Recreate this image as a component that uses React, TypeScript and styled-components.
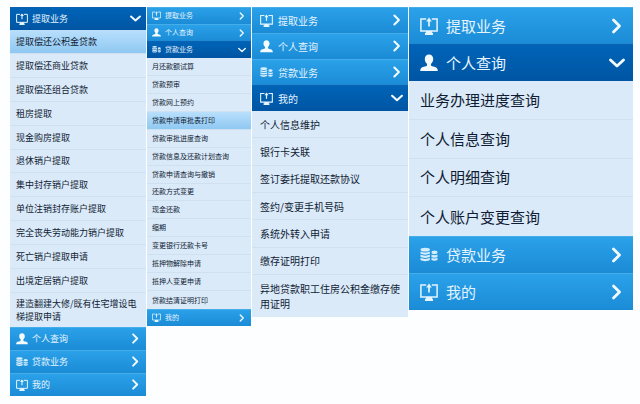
import React from "react";
import styled, { createGlobalStyle, css } from "styled-components";

const GlobalStyle = createGlobalStyle`
  * { box-sizing: border-box; }
  body {
    margin: 0;
    background: #fdfeff;
    font-family: "Noto Sans CJK SC", "Noto Sans", sans-serif;
  }
`;

type Size = "small" | "medium" | "large" | "xlarge";

interface Metrics {
  font: number;
  head: number;
  list: number;
  line: number;
  pad: number;
  indent: number;
  icon: number;
  gap: number;
  arrow: number;
  end: number;
}

const metrics: Record<Size, Metrics> = {
  small: { font: 7, head: 17, list: 251, line: 9, pad: 4, indent: 5, icon: 9, gap: 4, arrow: 8, end: 5 },
  medium: { font: 9, head: 23, list: 297, line: 13, pad: 4, indent: 6, icon: 12, gap: 4, arrow: 11, end: 5 },
  large: { font: 10, head: 26, list: 206, line: 15, pad: 6, indent: 8, icon: 13, gap: 5, arrow: 12, end: 5 },
  xlarge: { font: 15, head: 37, list: 155, line: 20, pad: 6, indent: 11, icon: 18, gap: 8, arrow: 16, end: 8 },
};

const Page = styled.main`
  display: grid;
  grid-template-columns: 136fr 104fr 156fr 224fr;
  column-gap: 1px;
  align-items: start;
  padding: 7px 7px 8px 10px;
`;

const Menu = styled.nav`
  min-width: 0;
  display: flex;
  flex-direction: column;
`;

const SectionButton = styled.button<{ $size: Size; $open: boolean }>`
  ${({ $size, $open }) => {
    const m = metrics[$size];
    return css`
      display: flex;
      align-items: center;
      gap: ${m.gap}px;
      width: 100%;
      min-height: ${m.head}px;
      padding: 0 ${m.end}px 0 ${m.indent}px;
      font: 400 ${m.font}px / ${m.line}px "Noto Sans CJK SC", "Noto Sans", sans-serif;
      background: ${$open
        ? "linear-gradient(#0064b8, #0055a3)"
        : "linear-gradient(#2ba2ea, #1b8bd6)"};
      box-shadow: inset 0 1px 0 ${$open ? "#0a62b0" : "#45aeea"};
    `;
  }}
  border: 0;
  color: #e4f4ff;
  text-align: left;
  cursor: pointer;
`;

const SectionTitle = styled.span`
  flex: 1;
  white-space: nowrap;
`;

const Icon = styled.svg<{ $width: number }>`
  flex: none;
  width: ${({ $width }) => $width}px;
  height: ${({ $width }) => $width}px;
`;

const List = styled.ul<{ $size: Size; $wrapLast: boolean }>`
  display: grid;
  grid-auto-rows: 1fr;
  min-height: ${({ $size }) => metrics[$size].list}px;
  margin: 0;
  padding: 0;
  list-style: none;
  background: #dbeaf9;
  ${({ $wrapLast, $size }) =>
    $wrapLast &&
    css`
      display: flex;
      flex-direction: column;

      & > li {
        flex: 1 0 auto;
      }

      & > li:last-child {
        flex: 0 0 auto;
        padding-bottom: ${metrics[$size].pad}px;
        padding-top: ${metrics[$size].pad}px;
      }
    `}
`;

const Row = styled.li<{ $active: boolean }>`
  display: flex;
  align-items: center;
  border-bottom: 1px solid #cfe1f1;
  ${({ $active }) =>
    $active &&
    css`
      background: linear-gradient(#b9dffc, #8fc8f2);
    `}

  &:last-child {
    border-bottom: 0;
  }
`;

const RowLink = styled.a<{ $size: Size }>`
  flex: 1;
  padding: 0 ${({ $size }) => metrics[$size].end}px 0 ${({ $size }) => metrics[$size].indent}px;
  font-size: ${({ $size }) => metrics[$size].font}px;
  line-height: ${({ $size }) => metrics[$size].line}px;
  color: #101c33;
  text-decoration: none;
`;

type IconName = "monitor" | "person" | "coins";

function SectionIcon({ name, width }: { name: IconName; width: number }) {
  if (name === "person") {
    return (
      <Icon $width={width} viewBox="0 0 18 18" fill="#f4fbff" aria-hidden="true">
        <path d="M9 .5c2.600 0 4.200 1.900 4.200 4.400 0 2-.9 3.800-2.200 4.800v1.500c.4 1 1.600 1.300 3.300 1.600 2.200.4 3.300 1.200 3.500 4.200H.2c.2-3 1.300-3.800 3.500-4.200 1.700-.3 2.900-.6 3.300-1.600V9.700c-1.300-1-2.200-2.800-2.200-4.800C4.800 2.400 6.400.5 9 .5z" />
      </Icon>
    );
  }
  if (name === "coins") {
    return (
      <Icon $width={width} viewBox="0 0 18 18" fill="#d5edfc" aria-hidden="true">
        <ellipse cx="5.200" cy="3.700" rx="4.700" ry="1.900" />
        <path d="M.5 5.400c2 1.500 7.400 1.500 9.400 0v2.200c-2 1.500-7.400 1.500-9.400 0zM.5 8.600c2 1.500 7.400 1.500 9.400 0v2.200c-2 1.500-7.400 1.500-9.400 0zM.5 11.800c2 1.500 7.400 1.500 9.400 0V14c-2 1.500-7.400 1.500-9.400 0z" />
        <ellipse cx="14.500" cy="6.300" rx="3" ry="1.900" />
        <path d="M11.500 8.500c1.500 1 4.500 1 6 0v2.400c-1.500 1-4.500 1-6 0zM11.500 11.800c1.500 1 4.500 1 6 0V14c-1.500 1-4.500 1-6 0z" />
      </Icon>
    );
  }
  return (
    <Icon $width={width} viewBox="0 0 18 18" fill="none" stroke="#e4f5ff" aria-hidden="true">
      <path d="M6.200 2H.9v12h16.200V2h-5.300" strokeWidth="1.500" />
      <path d="M9 9.500V2" strokeWidth="1.700" />
      <path d="M6.200 4.500L9 .6l2.800 3.900z" fill="#e4f5ff" stroke="none" />
      <path d="M6 14h6v1.700h1V18H5v-2.300h1z" fill="#e4f5ff" stroke="none" />
    </Icon>
  );
}

function Chevron({ open, width }: { open: boolean; width: number }) {
  return (
    <Icon
      $width={width}
      viewBox="0 0 16 16"
      fill="none"
      stroke="#f2faff"
      strokeWidth="2.800"
      strokeLinecap="round"
      strokeLinejoin="round"
      aria-hidden="true"
    >
      <path d={open ? "M1.500 5L8 11l6.500-6" : "M4.500 2L10.500 8l-6 6"} />
    </Icon>
  );
}

interface Section {
  title: string;
  icon: IconName;
  items?: string[];
  active?: string;
}

const withdraw: Section = { title: "提取业务", icon: "monitor" };
const personal: Section = { title: "个人查询", icon: "person" };
const loans: Section = { title: "贷款业务", icon: "coins" };
const mine: Section = { title: "我的", icon: "monitor" };

const menus: { size: Size; wrapLast: boolean; sections: Section[] }[] = [
  {
    size: "medium",
    wrapLast: true,
    sections: [
      {
        ...withdraw,
        active: "提取偿还公积金贷款",
        items: [
          "提取偿还公积金贷款",
          "提取偿还商业贷款",
          "提取偿还组合贷款",
          "租房提取",
          "现金购房提取",
          "退休销户提取",
          "集中封存销户提取",
          "单位注销封存账户提取",
          "完全丧失劳动能力销户提取",
          "死亡销户提取申请",
          "出境定居销户提取",
          "建造翻建大修/既有住宅增设电梯提取申请",
        ],
      },
      personal,
      loans,
      mine,
    ],
  },
  {
    size: "small",
    wrapLast: false,
    sections: [
      withdraw,
      personal,
      {
        ...loans,
        active: "贷款申请审批表打印",
        items: [
          "月还款额试算",
          "贷款预审",
          "贷款网上预约",
          "贷款申请审批表打印",
          "贷款审批进度查询",
          "贷款信息及还款计划查询",
          "贷款申请查询与撤销",
          "还款方式变更",
          "现金还款",
          "缩期",
          "变更银行还款卡号",
          "抵押物解除申请",
          "抵押人变更申请",
          "贷款结清证明打印",
        ],
      },
      mine,
    ],
  },
  {
    size: "large",
    wrapLast: true,
    sections: [
      withdraw,
      personal,
      loans,
      {
        ...mine,
        items: [
          "个人信息维护",
          "银行卡关联",
          "签订委托提取还款协议",
          "签约/变更手机号码",
          "系统外转入申请",
          "缴存证明打印",
          "异地贷款职工住房公积金缴存使用证明",
        ],
      },
    ],
  },
  {
    size: "xlarge",
    wrapLast: false,
    sections: [
      withdraw,
      {
        ...personal,
        items: ["业务办理进度查询", "个人信息查询", "个人明细查询", "个人账户变更查询"],
      },
      loans,
      mine,
    ],
  },
];

export default function App() {
  return (
    <>
      <GlobalStyle />
      <Page lang="zh-CN">
        {menus.map(({ size, wrapLast, sections }) => (
          <Menu key={size}>
            {sections.map(({ title, icon, items, active }) => (
              <React.Fragment key={title}>
                <SectionButton type="button" $size={size} $open={!!items} aria-expanded={!!items}>
                  <SectionIcon name={icon} width={metrics[size].icon} />
                  <SectionTitle>{title}</SectionTitle>
                  <Chevron open={!!items} width={metrics[size].arrow} />
                </SectionButton>
                {items && (
                  <List $size={size} $wrapLast={wrapLast}>
                    {items.map((item) => (
                      <Row key={item} $active={item === active}>
                        <RowLink href="#" $size={size}>
                          {item}
                        </RowLink>
                      </Row>
                    ))}
                  </List>
                )}
              </React.Fragment>
            ))}
          </Menu>
        ))}
      </Page>
    </>
  );
}
